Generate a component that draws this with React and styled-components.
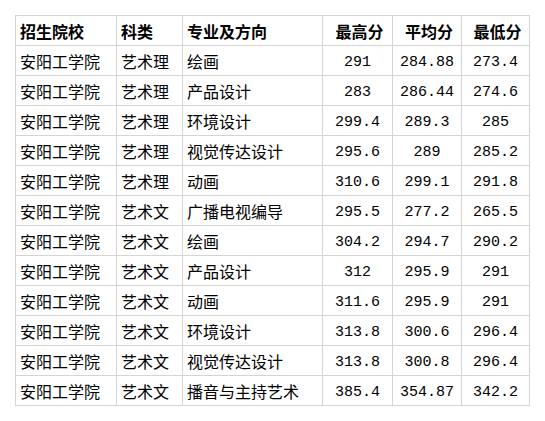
import React from "react";
import styled, { createGlobalStyle } from "styled-components";

const GlobalStyle = createGlobalStyle`
  html, body {
    margin: 0;
    padding: 0;
    background: #ffffff;
  }
  body {
    font-family: "Noto Sans CJK SC", "Noto Sans", sans-serif;
    color: #000000;
  }
`;

const Page = styled.div`
  padding: 15px;
`;

const Table = styled.table`
  border-collapse: collapse;
  table-layout: fixed;
  width: 514px;
`;

const HeadCell = styled.th`
  height: 29px;
  padding: 0 0 0 4px;
  border: 1px solid #d4d4d4;
  font-size: 16px;
  font-weight: 700;
  text-align: ${({ $num }) => ($num ? "center" : "left")};
  white-space: nowrap;
  line-height: 1;
`;

const Cell = styled.td`
  height: ${({ $num }) => ($num ? "26px" : "29px")};
  padding: ${({ $num }) => ($num ? "3px 0 0 0" : "0 0 0 4px")};
  border: 1px solid #d4d4d4;
  font-size: ${({ $num }) => ($num ? "15px" : "16px")};
  font-family: ${({ $num }) =>
    $num ? '"Liberation Mono", "DejaVu Sans Mono", monospace' : "inherit"};
  text-align: ${({ $num }) => ($num ? "center" : "left")};
  white-space: nowrap;
  line-height: 1;
`;

const COLS = [101, 66, 140, 70, 69, 68];

const HEADERS = [
  { label: "招生院校" },
  { label: "科类" },
  { label: "专业及方向" },
  { label: "最高分", num: true },
  { label: "平均分", num: true },
  { label: "最低分", num: true },
];

const ROWS = [
  ["艺术理", "绘画", "291", "284.88", "273.4"],
  ["艺术理", "产品设计", "283", "286.44", "274.6"],
  ["艺术理", "环境设计", "299.4", "289.3", "285"],
  ["艺术理", "视觉传达设计", "295.6", "289", "285.2"],
  ["艺术理", "动画", "310.6", "299.1", "291.8"],
  ["艺术文", "广播电视编导", "295.5", "277.2", "265.5"],
  ["艺术文", "绘画", "304.2", "294.7", "290.2"],
  ["艺术文", "产品设计", "312", "295.9", "291"],
  ["艺术文", "动画", "311.6", "295.9", "291"],
  ["艺术文", "环境设计", "313.8", "300.6", "296.4"],
  ["艺术文", "视觉传达设计", "313.8", "300.8", "296.4"],
  ["艺术文", "播音与主持艺术", "385.4", "354.87", "342.2"],
];

export default function App() {
  return (
    <Page>
      <GlobalStyle />
      <Table>
        <colgroup>
          {COLS.map((w, i) => (
            <col key={i} style={{ width: w }} />
          ))}
        </colgroup>
        <thead>
          <tr>
            {HEADERS.map((h) => (
              <HeadCell key={h.label} $num={h.num}>
                {h.label}
              </HeadCell>
            ))}
          </tr>
        </thead>
        <tbody>
          {ROWS.map((r, i) => (
            <tr key={i}>
              <Cell>安阳工学院</Cell>
              <Cell>{r[0]}</Cell>
              <Cell>{r[1]}</Cell>
              <Cell $num>{r[2]}</Cell>
              <Cell $num>{r[3]}</Cell>
              <Cell $num>{r[4]}</Cell>
            </tr>
          ))}
        </tbody>
      </Table>
    </Page>
  );
}
